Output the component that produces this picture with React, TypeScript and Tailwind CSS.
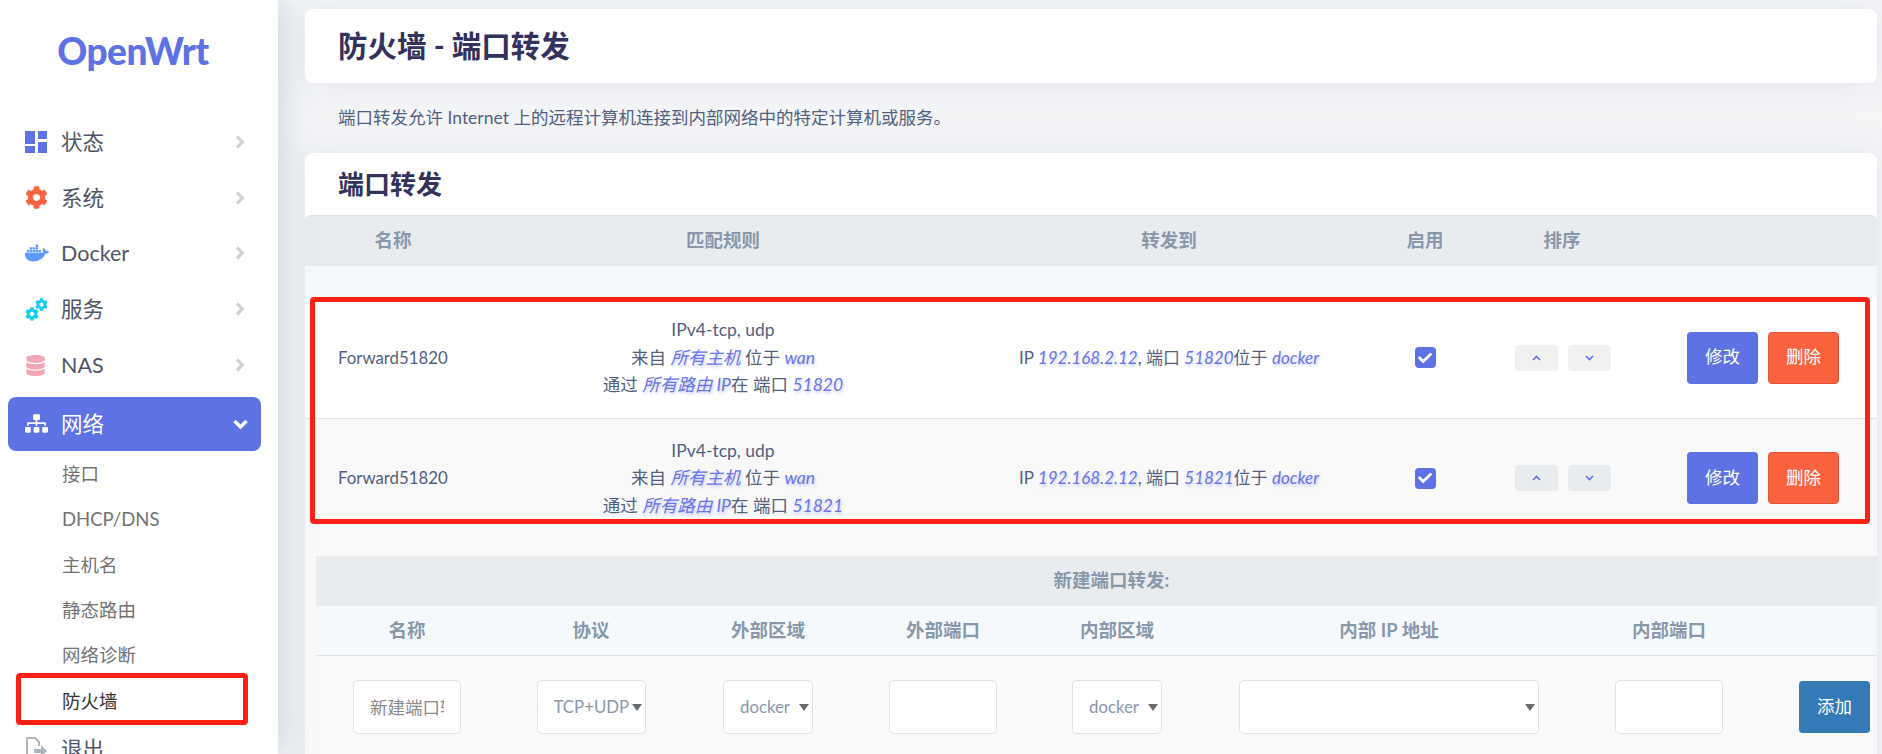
import { FaCheck, FaCog, FaDatabase, FaDocker, FaSitemap } from "react-icons/fa";

const menu = [
	{ label: "状态", icon: <DashIcon /> },
	{ label: "系统", icon: <FaCog size={23} className="text-[#fb6340]" /> },
	{ label: "Docker", icon: <FaDocker size={24} className="text-[#5e9bff]" /> },
	{ label: "服务", icon: <CogsIcon /> },
	{ label: "NAS", icon: <FaDatabase size={21} className="text-[#f3a4b5]" /> },
];

const subMenu = ["接口", "DHCP/DNS", "主机名", "静态路由", "网络诊断", "防火墙"];

const rows = [
	{ port: "51820", bg: "bg-white border-b border-[#dee2e6] h-[122px]", sortBg: "bg-[#f1f1f1]" },
	{ port: "51821", bg: "bg-[#f9f9f9] h-[118px]", sortBg: "bg-[#e9ecef]" },
];

function DashIcon() {
	return (
		<svg width="22" height="22" viewBox="0 0 22 22" fill="#5e72e4">
			<rect x="0" y="0" width="10" height="13" />
			<rect x="13" y="0" width="9" height="8" />
			<rect x="0" y="15" width="10" height="7" />
			<rect x="13" y="11" width="9" height="11" />
		</svg>
	);
}

function CogsIcon() {
	return (
		<svg width="22" height="23" viewBox="0 0 22 23" className="text-[#11cdef]">
			<FaCog x={0} y={9} size={14} />
			<FaCog x={10} y={0} size={13} />
		</svg>
	);
}

function ExitIcon() {
	return (
		<svg width="22" height="26" viewBox="0 0 22 26" fill="none" stroke="#adb5bd" strokeWidth="2">
			<path d="M14 20v5H2V2h8l4 4v4" />
			<path d="M9 13h7V9l6 6-6 6v-4H9z" fill="#adb5bd" stroke="none" />
		</svg>
	);
}

function ChevronRight() {
	return (
		<svg width="10" height="14" viewBox="0 0 10 14" fill="none" stroke="#ced4da" strokeWidth="3.2">
			<path d="M2 1.5L7.5 7 2 12.5" />
		</svg>
	);
}

function Link({ children }: { children: React.ReactNode }) {
	return <em className="text-[#6b75e6] [text-shadow:1px_2px_3px_rgba(94,114,228,0.35)]">{children}</em>;
}

function Sort({ up, bg }: { up?: boolean; bg: string }) {
	return (
		<button className={`flex h-[26px] w-[43px] items-center justify-center rounded-[4px] ${bg}`}>
			<svg width="9" height="6" viewBox="0 0 9 6" fill="none" stroke="#5e72e4" strokeWidth="1.6">
				<path d={up ? "M1 5l3.5-3.5L8 5" : "M1 1l3.5 3.5L8 1"} />
			</svg>
		</button>
	);
}

function Select({ value, width }: { value?: string; width: string }) {
	return (
		<div className={`relative h-[54px] ${width}`}>
			<select className="h-full w-full appearance-none rounded-[5px] border border-[#dee2e6] bg-white pl-[16px] text-[16.8px] text-[#8898aa]">
				{value && <option>{value}</option>}
			</select>
			<span className="pointer-events-none absolute right-[4px] top-[24px] h-0 w-0 border-x-[5px] border-t-[7px] border-x-transparent border-t-[#6b6b6b]" />
		</div>
	);
}

function Field({ placeholder }: { placeholder?: string }) {
	return (
		<input
			placeholder={placeholder}
			className="h-[54px] w-[108px] rounded-[5px] border border-[#dee2e6] bg-white px-[16px] text-[17.5px] placeholder:text-[#8a8a8a]"
		/>
	);
}

export default function App() {
	return (
		<div className="flex h-[754px] overflow-hidden bg-[#f4f5f7] font-['Lato','Noto_Sans_CJK_SC',sans-serif] text-[17.5px] text-[#525f7f]">
			<aside className="z-10 w-[278px] shrink-0 overflow-hidden bg-white shadow-[0_0_32px_rgba(136,152,170,0.45)]">
				<div className="flex h-[114px] justify-center pr-[12px] pt-[24px]">
					<span className="text-[37px] leading-[54px] font-black tracking-[-0.5px] text-[#5e72e4]">OpenWrt</span>
				</div>
				<nav className="flex flex-col text-[21.5px] text-[#4f5468]">
					{menu.map((item) => (
						<div key={item.label} className="flex h-[55.8px] items-center pl-[25px] pr-[33px]">
							<span className="flex w-[36px] items-center">{item.icon}</span>
							<span className="flex-1">{item.label}</span>
							<ChevronRight />
						</div>
					))}
					<div className="ml-[8px] mr-[17px] mt-[4px] flex h-[54px] items-center rounded-[8px] bg-[#5e72e4] pl-[17px] pr-[13px] text-white">
						<span className="flex w-[36px] items-center"><FaSitemap size={23} /></span>
						<span className="flex-1">网络</span>
						<svg width="15" height="10" viewBox="0 0 15 10" fill="none" stroke="white" strokeWidth="3.4">
							<path d="M1.5 2L7.5 8l6-6" />
						</svg>
					</div>
					<div className="relative pt-[1px] text-[18.5px] text-[#737373]">
						{subMenu.map((label) => (
							<div key={label} className={`flex h-[45.4px] items-center pl-[62px] ${label === "防火墙" ? "text-[#333]" : ""}`}>
								{label}
							</div>
						))}
						<div className="absolute left-[16px] top-[222px] h-[52px] w-[232px] rounded-[4px] border-[5px] border-[#ff2116]" />
					</div>
					<div className="-mt-[2px] flex h-[54px] items-center pl-[25px]">
						<span className="flex w-[36px] items-center"><ExitIcon /></span>
						<span>退出</span>
					</div>
				</nav>
			</aside>

			<main className="min-w-0 flex-1 pl-[27px] pr-[5px] pt-[9px]">
				<div className="flex h-[74px] items-center rounded-[8px] bg-white px-[33px] shadow-[0_0_32px_rgba(136,152,170,0.15)]">
					<h2 className="text-[29.5px] font-bold text-[#32325d]">防火墙 - 端口转发</h2>
				</div>
				<p className="flex h-[70px] items-center pl-[33px]">端口转发允许 Internet 上的远程计算机连接到内部网络中的特定计算机或服务。</p>

				<section className="h-[700px] rounded-[8px] bg-white shadow-[0_0_32px_rgba(136,152,170,0.15)]">
					<h3 className="flex h-[62px] items-center pl-[33px] text-[26px] font-bold text-[#32325d]">端口转发</h3>

					<div className="grid h-[51px] grid-cols-[176px_484px_408px_104px_170px_230px] items-center rounded-t-[6px] border-t border-[#dee2e6] bg-[#e9ecef] text-center text-[18.5px] font-bold text-[#8898aa]">
						<span>名称</span>
						<span>匹配规则</span>
						<span>转发到</span>
						<span>启用</span>
						<span>排序</span>
					</div>
					<div className="h-[31px] bg-[#f6f9fc]" />

					<div className="relative bg-[#f9f9f9] pb-[19px]">
						{rows.map((row) => (
							<div key={row.port} className={`grid grid-cols-[176px_484px_408px_104px_170px_230px] items-center ${row.bg}`}>
								<span className="pl-[33px] text-[16.8px]">Forward51820</span>
								<div className="text-center leading-[27.6px]">
									<div>IPv4-tcp, udp</div>
									<div>来自 <Link>所有主机</Link> 位于 <Link>wan</Link></div>
									<div>通过 <Link>所有路由 IP</Link>在 端口 <Link>{row.port}</Link></div>
								</div>
								<div className="text-center text-[17px]">IP <Link>192.168.2.12</Link>, 端口 <Link>{row.port}</Link>位于 <Link>docker</Link></div>
								<div className="flex justify-center">
									<span className="flex h-[21px] w-[21px] items-center justify-center rounded-[4px] bg-[#5e72e4] text-white">
										<FaCheck size={14} />
									</span>
								</div>
								<div className="ml-[1px] flex justify-center gap-[10px]">
									<Sort up bg={row.sortBg} />
									<Sort bg={row.sortBg} />
								</div>
								<div className="flex justify-end gap-[10px] pr-[38px] text-white">
									<button className="h-[52px] w-[71px] rounded-[4px] bg-[#5e72e4]">修改</button>
									<button className="h-[52px] w-[71px] rounded-[4px] border border-[#e0513a] bg-[#fb6340]">删除</button>
								</div>
							</div>
						))}
						<div className="absolute left-[5px] right-[7px] top-0 h-[227px] rounded-[4px] border-[5px] border-[#ff2116]" />
					</div>

					<div className="h-[300px] bg-[#f9f9f9] pl-[11px]">
						<div className="flex h-[50px] items-center justify-center bg-[#e9ecef] pl-[30px] text-[18.5px] font-bold text-[#8898aa]">新建端口转发:</div>
						<div className="grid h-[50px] grid-cols-[182px_186px_168px_182px_166px_378px_182px_117px] items-center border-b border-[#dee2e6] bg-[#f6f9fc] text-center text-[18.5px] font-bold text-[#8898aa]">
							<span>名称</span>
							<span>协议</span>
							<span>外部区域</span>
							<span>外部端口</span>
							<span>内部区域</span>
							<span>内部 IP 地址</span>
							<span>内部端口</span>
						</div>
						<div className="grid grid-cols-[182px_186px_168px_182px_166px_378px_182px_117px] items-center justify-items-center pt-[24px]">
							<Field placeholder="新建端口转发" />
							<Select value="TCP+UDP" width="w-[109px]" />
							<Select value="docker" width="w-[90px]" />
							<Field />
							<Select value="docker" width="w-[90px]" />
							<Select width="w-[300px]" />
							<Field />
							<button className="ml-[32px] h-[52px] w-[71px] rounded-[4px] bg-[#337ab7] text-white">添加</button>
						</div>
					</div>
				</section>
			</main>
		</div>
	);
}
